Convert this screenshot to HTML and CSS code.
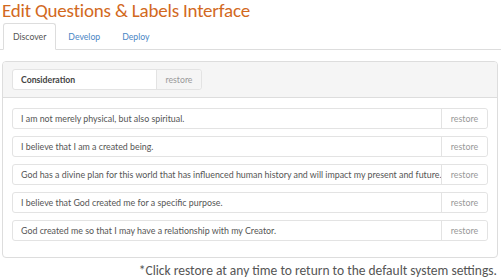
FILE: index.html
```html
<!DOCTYPE html>
<html>
<head>
<meta charset="utf-8">
<link rel="stylesheet" href="styles.css">
</head>
<body>
<h1 class="title">Edit Questions &amp; Labels Interface</h1>
<ul class="tabs">
  <li class="tab active">Discover</li>
  <li class="tab">Develop</li>
  <li class="tab">Deploy</li>
</ul>
<div class="panel">
  <div class="panel-head">
    <div class="group head-group">
      <div class="field bold">Consideration</div>
      <div class="addon">restore</div>
    </div>
  </div>
  <div class="panel-body">
    <div class="group"><div class="field">I am not merely physical, but also spiritual.</div><div class="addon">restore</div></div>
    <div class="group"><div class="field">I believe that I am a created being.</div><div class="addon">restore</div></div>
    <div class="group"><div class="field">God has a divine plan for this world that has influenced human history and will impact my present and future.</div><div class="addon">restore</div></div>
    <div class="group"><div class="field">I believe that God created me for a specific purpose.</div><div class="addon">restore</div></div>
    <div class="group"><div class="field">God created me so that I may have a relationship with my Creator.</div><div class="addon">restore</div></div>
  </div>
</div>
<p class="note">*Click restore at any time to return to the default system settings.</p>
</body>
</html>
```
FILE: styles.css
```css
*, *::before, *::after {
  box-sizing: border-box;
}
html, body {
  margin: 0;
  padding: 0;
  background: #fff;
}
body {
  width: 501px;
  height: 280px;
  overflow: hidden;
  font-family: Lato, "Open Sans", sans-serif;
  color: #555;
}
.title {
  margin: 0;
  padding: 0 0 0 2px;
  font-family: Carlito, "Open Sans", sans-serif;
  font-weight: normal;
  font-size: 19px;
  line-height: 22px;
  color: #d2691e;
  letter-spacing: -0.2px;
}
.tabs {
  list-style: none;
  margin: 1px 0 0 0;
  padding: 0 0 0 3px;
  display: flex;
  border-bottom: 1px solid #ddd;
  height: 27px;
}
.tab {
  font-size: 8.7px;
  line-height: 25px;
  padding: 0 9px;
  margin-right: 2px;
  color: #4a86c5;
  border: 1px solid transparent;
  border-radius: 3px 3px 0 0;
}
.tab.active {
  color: #555;
  border-color: #ddd;
  border-bottom-color: #fff;
  background: #fff;
  height: 27px;
}
.panel {
  margin: 11px 3px 0 2px;
  border: 1px solid #ddd;
  border-radius: 4px;
  overflow: hidden;
}
.panel-head {
  background: #f5f5f5;
  border-bottom: 1px solid #ddd;
  padding: 7px 9px;
}
.panel-body {
  padding: 10px 9px 16px;
  display: flex;
  flex-direction: column;
  gap: 7px;
}
.group {
  display: flex;
  height: 21px;
  border: 1px solid #e3e3e3;
  border-radius: 3px;
  background: #fff;
  font-size: 8.85px;
}
.head-group {
  width: 190px;
  font-size: 8.7px;
}
.head-group .field {
  width: 144px;
  flex: none;
}
.field {
  flex: 1;
  padding: 0 8px;
  line-height: 19px;
  color: #555;
  white-space: nowrap;
  overflow: hidden;
  border-right: 1px solid #e3e3e3;
}
.field.bold {
  font-weight: bold;
  color: #444;
}
.addon {
  width: 45px;
  flex: none;
  text-align: center;
  line-height: 19px;
  color: #999;
  background: #fff;
  border-radius: 0 3px 3px 0;
}
.head-group .addon {
  flex: 1;
  width: auto;
  background: #f5f5f5;
}
.note {
  margin: 5px 4px 0 0;
  text-align: right;
  font-family: Carlito, "Open Sans", sans-serif;
  font-size: 13.5px;
  line-height: 16px;
  color: #555;
}
```
